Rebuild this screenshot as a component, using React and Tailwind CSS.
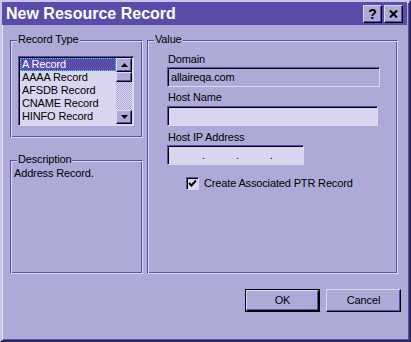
const records = ['A Record', 'AAAA Record', 'AFSDB Record', 'CNAME Record', 'HINFO Record', 'ISDN Record'];

const raised =
  'border border-t-[#dcd8f0] border-l-[#dcd8f0] border-r-black border-b-black shadow-[inset_-1px_-1px_0_#5b4dab] bg-[#adaad8]';
const sunken =
  'border border-t-[#5b4dab] border-l-[#5b4dab] border-r-[#dcd8f0] border-b-[#dcd8f0] shadow-[inset_1px_1px_0_#000]';
const etched =
  'relative border border-t-[#5b4dab] border-l-[#5b4dab] border-r-[#dcd8f0] border-b-[#dcd8f0] shadow-[inset_1px_1px_0_#dcd8f0,inset_-1px_-1px_0_#5b4dab]';

const GroupBox = ({ label, className, children }) => (
  <div className={`${etched} ${className}`}>
    <span className="absolute left-[6px] top-[-8px] bg-[#adaad8] px-[1px] leading-[13px]">{label}</span>
    {children}
  </div>
);

const Arrow = ({ up }) => (
  <svg width="7" height="4" viewBox="0 0 7 4">
    <polygon points={up ? '3.5,0 7,4 0,4' : '0,0 7,0 3.5,4'} fill="#000" />
  </svg>
);

const ListBox = () => (
  <div className={`${sunken} flex h-[70px] w-[116px] bg-[#dad6ef] p-[1px]`}>
    <div className="flex-1 overflow-hidden pt-[0px]">
      {records.map((name, i) => (
        <div
          key={name}
          className={
            i === 0
              ? 'h-[13px] bg-[#5b4cac] pl-[2px] leading-[13px] text-white outline-1 -outline-offset-1 outline-dotted outline-[#22e6f0]'
              : 'h-[13px] pl-[2px] leading-[13px]'
          }
        >
          {name}
        </div>
      ))}
    </div>
    <div className="flex w-[16px] flex-col">
      <div className={`${raised} flex h-[14px] items-center justify-center`}>
        <Arrow up />
      </div>
      <div className={`${raised} h-[10px]`} />
      <div className="flex-1 bg-[repeating-conic-gradient(#dad6ef_0_25%,#adaad8_0_50%)] bg-[length:2px_2px]" />
      <div className={`${raised} flex h-[14px] items-center justify-center`}>
        <Arrow />
      </div>
    </div>
  </div>
);

const Field = ({ className, children }) => (
  <div className={`${sunken} flex h-[20px] items-center pl-[2px] ${className}`}>{children}</div>
);

export default function App() {
  return (
    <div className="h-[342px] w-[411px] bg-[#adaad8] font-['Liberation_Sans',Arial,sans-serif] text-[11px] tracking-[-0.15px] text-black">
      <div className="flex h-[342px] w-[411px] flex-col border-2 border-t-[#c9c5e6] border-l-[#c9c5e6] border-r-[#2e2760] border-b-[#2e2760] shadow-[inset_1px_1px_0_#e4e1f5,inset_-1px_-1px_0_#5b4dab]">
        <div className="mr-[2px] flex h-[23px] items-center bg-[#5b4cac] pl-[4px] pr-[4px]">
          <span className="flex-1 text-[16px] font-bold tracking-normal text-white">New Resource Record</span>
          <div className="flex gap-[2px]">
            <div className={`${raised} flex h-[18px] w-[19px] items-center justify-center text-[14px] font-bold leading-none`}>
              ?
            </div>
            <div className={`${raised} flex h-[18px] w-[19px] items-center justify-center`}>
              <svg width="9" height="8" viewBox="0 0 9 8">
                <path d="M1 0.5 L8 7.5 M8 0.5 L1 7.5" stroke="#000" strokeWidth="2" />
              </svg>
            </div>
          </div>
        </div>

        <div className="flex flex-col pl-[8px] pt-[15px]">
          <div className="flex gap-[4px]">
            <div className="flex w-[133px] flex-col">
              <GroupBox label="Record Type" className="h-[98px] pl-[7px] pt-[15px]">
                <ListBox />
              </GroupBox>
              <GroupBox label="Description" className="mt-[22px] h-[114px] pl-[3px] pt-[6px]">
                <p className="leading-[13px]">Address Record.</p>
              </GroupBox>
            </div>

            <GroupBox label="Value" className="h-[234px] w-[251px] pl-[19px] pt-[12px]">
              <div className="flex flex-col">
                <span className="pl-[1px] leading-[13px]">Domain</span>
                <Field className="mt-[1px] w-[213px] bg-[#adaad8]">
                  <span className="pl-[1px]">allaireqa.com</span>
                </Field>
                <span className="mt-[4px] pl-[1px] leading-[13px]">Host Name</span>
                <Field className="mt-[2px] w-[211px] bg-[#dad6ef]" />
                <span className="mt-[5px] pl-[1px] leading-[13px]">Host IP Address</span>
                <Field className="mt-[1px] w-[137px] bg-[#dad6ef]">
                  <span className="ml-[32px]">.</span>
                  <span className="ml-[31px]">.</span>
                  <span className="ml-[31px]">.</span>
                </Field>
                <div className="ml-[19px] mt-[12px] flex items-center">
                  <div className={`${sunken} flex h-[13px] w-[13px] items-center justify-center bg-[#dad6ef]`}>
                    <svg width="9" height="9" viewBox="0 0 9 9">
                      <path d="M1 4 L3.5 6.5 L8 1.5" stroke="#000" strokeWidth="2" fill="none" />
                    </svg>
                  </div>
                  <span className="ml-[5px] leading-[13px]">Create Associated PTR Record</span>
                </div>
              </div>
            </GroupBox>
          </div>

          <div className="mt-[15px] flex justify-end gap-[6px] pr-[8px]">
            <div className="h-[23px] w-[75px] border border-black">
              <div className={`${raised} flex h-full w-full items-center justify-center`}>OK</div>
            </div>
            <div className={`${raised} flex h-[23px] w-[75px] items-center justify-center`}>Cancel</div>
          </div>
        </div>
      </div>
    </div>
  );
}
